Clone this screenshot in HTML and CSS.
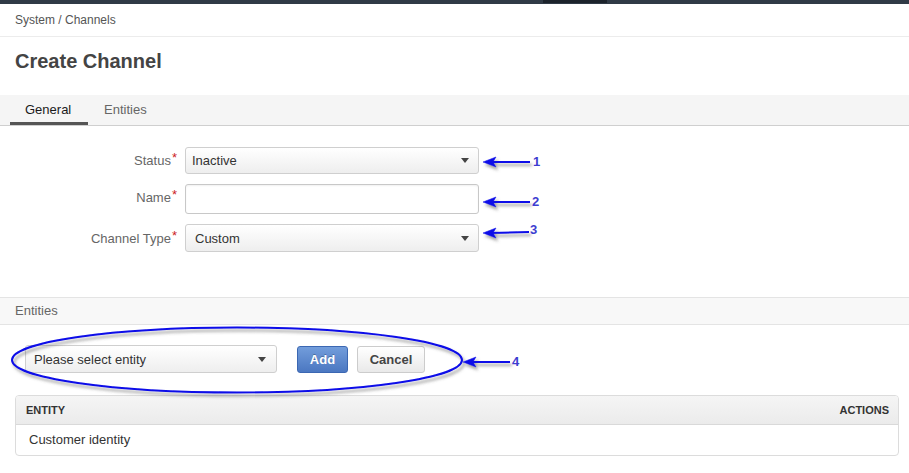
FILE: index.html
```html
<!DOCTYPE html>
<html lang="en">
<head>
<meta charset="utf-8">
<title>Create Channel</title>
<link rel="stylesheet" href="styles.css">
</head>
<body>
<div class="page">
  <div class="topbar"><span class="topbar-seg"></span></div>
  <div class="breadcrumb">System / Channels</div>
  <h1 class="title">Create Channel</h1>
  <div class="tabs">
    <div class="tab active">General</div>
    <div class="tab">Entities</div>
  </div>
  <div class="form">
    <div class="form-row">
      <label class="label">Status<em class="req">*</em></label>
      <div class="select"><span>Inactive</span><i class="caret"></i></div>
    </div>
    <div class="form-row">
      <label class="label label-up">Name<em class="req">*</em></label>
      <div class="input"></div>
    </div>
    <div class="form-row">
      <label class="label">Channel Type<em class="req">*</em></label>
      <div class="select select-custom"><span>Custom</span><i class="caret"></i></div>
    </div>
  </div>
  <div class="section-head">Entities</div>
  <div class="entity-row">
    <div class="select entity-select"><span>Please select entity</span><i class="caret"></i></div>
    <button class="btn btn-primary">Add</button>
    <button class="btn btn-default">Cancel</button>
  </div>
  <div class="grid">
    <div class="grid-head">
      <span>ENTITY</span>
      <span>ACTIONS</span>
    </div>
    <div class="grid-row">Customer identity</div>
  </div>

  <svg class="annot" width="909" height="473" viewBox="0 0 909 473" xmlns="http://www.w3.org/2000/svg">
    <defs>
      <filter id="sh" x="-10%" y="-40%" width="130%" height="200%">
        <feDropShadow dx="2" dy="3" stdDeviation="1.6" flood-color="#555" flood-opacity="0.55"/>
      </filter>
    </defs>
    <g filter="url(#sh)" fill="#0a0ae8" stroke="#0a0ae8">
      <line x1="490" y1="162" x2="530" y2="162" stroke-width="2"/>
      <polygon points="483,162 496,157 493,162 496,167" stroke-width="0.5"/>
      <line x1="490" y1="202" x2="530" y2="202" stroke-width="2"/>
      <polygon points="483,202 496,197 493,202 496,207" stroke-width="0.5"/>
      <line x1="490" y1="233" x2="529" y2="232" stroke-width="2"/>
      <polygon points="483,233 496,228 493,233 496,238" stroke-width="0.5"/>
      <line x1="470" y1="362" x2="510" y2="362" stroke-width="2"/>
      <polygon points="463,362 476,357 473,362 476,367" stroke-width="0.5"/>
      <ellipse cx="237" cy="360" rx="225" ry="32.5" fill="none" stroke-width="2"/>
    </g>
    <g class="nums" fill="#3d3dd0">
      <text x="533" y="166">1</text>
      <text x="532" y="206">2</text>
      <text x="530" y="234">3</text>
      <text x="512" y="366">4</text>
    </g>
  </svg>
</div>
</body>
</html>
```

FILE: styles.css
```css
* { box-sizing: border-box; }
html, body { margin: 0; padding: 0; background: #fff; }
body {
  font-family: "Liberation Sans", Arial, sans-serif;
  font-size: 13px;
  color: #333;
}
.page { position: relative; width: 909px; height: 473px; overflow: hidden; }

.topbar { height: 4px; background: #303a46; padding-left: 543px; }
.topbar-seg { display: block; width: 64px; height: 3px; background: #1c232b; }

.breadcrumb {
  height: 33px;
  padding: 9px 15px 0;
  font-size: 12px;
  color: #555;
  border-bottom: 1px solid #ececec;
}

.title {
  margin: 0;
  padding: 12px 15px 22px;
  font-size: 20px;
  line-height: 24px;
  font-weight: bold;
  color: #444;
}

.tabs {
  display: flex;
  height: 31px;
  padding-left: 10px;
  background: #f5f5f5;
  border-bottom: 1px solid #cfcfcf;
}
.tab {
  height: 30px;
  padding: 0 15px 0 16px;
  line-height: 29px;
  color: #666;
  border-bottom: 3px solid transparent;
}
.tab.active { color: #1a1a1a; border-bottom-color: #555; padding: 0 15px; width: 78px; }

.form {
  display: flex;
  flex-direction: column;
  gap: 10px;
  padding: 21px 0 45px;
}
.form-row { display: flex; align-items: center; gap: 8px; }
.label {
  width: 177px;
  text-align: right;
  color: #666;
  font-size: 13px;
}
.label-up { position: relative; top: -2px; }
.req {
  font-style: normal;
  color: #cc1f1f;
  font-size: 13px;
  position: relative;
  top: -3px;
  margin-left: 1px;
}

.select {
  display: flex;
  align-items: center;
  width: 294px;
  height: 27px;
  padding: 0 9px 0 6px;
  border: 1px solid #cfcfcf;
  border-radius: 3px;
  background: linear-gradient(#ffffff, #eeeeee);
  color: #333;
}
.select-custom { height: 28px; padding-left: 9px; }
.select span { flex: 1; }
.caret {
  width: 0;
  height: 0;
  border-left: 4px solid transparent;
  border-right: 4px solid transparent;
  border-top: 5px solid #444;
}
.input {
  width: 294px;
  height: 30px;
  border: 1px solid #c8c8c8;
  border-radius: 3px;
  background: #fff;
  box-shadow: inset 0 1px 2px rgba(0,0,0,0.06);
}

.section-head {
  height: 28px;
  padding: 0 15px;
  line-height: 26px;
  color: #666;
  background: #f8f8f8;
  border-top: 1px solid #e4e4e4;
  border-bottom: 1px solid #e4e4e4;
}

.entity-row {
  display: flex;
  align-items: center;
  padding: 20px 0 0 25px;
  height: 48px;
}
.entity-select { width: 252px; padding: 0 10px 0 8px; height: 28px; }
.btn {
  height: 27px;
  font-family: "Liberation Sans", Arial, sans-serif;
  font-size: 13px;
  font-weight: bold;
  border-radius: 3px;
  padding: 0;
}
.btn-primary {
  margin-left: 20px;
  width: 51px;
  color: #fff;
  background: linear-gradient(#729ddb, #4b77c1);
  border: 1px solid #3b67b2;
  text-shadow: 0 -1px 0 rgba(0,0,0,0.25);
}
.btn-default {
  margin-left: 9px;
  width: 68px;
  color: #444;
  background: linear-gradient(#ffffff, #e9e9e9);
  border: 1px solid #cccccc;
}

.grid {
  margin: 22px 10px 0 15px;
  border: 1px solid #dcdcdc;
  border-radius: 4px;
  overflow: hidden;
}
.grid-head {
  display: flex;
  justify-content: space-between;
  align-items: center;
  height: 29px;
  padding: 0 9px 0 10px;
  background: linear-gradient(#f5f5f5, #ebebeb);
  border-bottom: 1px solid #d9d9d9;
  font-size: 11px;
  font-weight: bold;
  color: #333;
}
.grid-row {
  height: 30px;
  padding: 0 13px;
  line-height: 29px;
  color: #333;
}

.annot { position: absolute; top: 0; left: 0; pointer-events: none; }
.nums text { font-family: "Liberation Sans", Arial, sans-serif; font-size: 13px; font-weight: bold; }
```
